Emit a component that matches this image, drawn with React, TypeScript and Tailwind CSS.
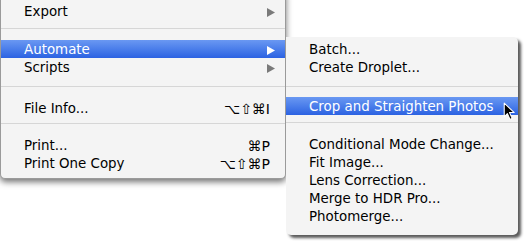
const Arrow = ({ active }: { active?: boolean }) => (
  <svg width="8" height="9" viewBox="0 0 8 9" className="ml-auto">
    <path d="M0 0 L8 4.5 L0 9 Z" fill={active ? "#ffffff" : "#7a7a7a"} />
  </svg>
);

const Row = ({
  label,
  shortcut,
  submenu,
  active,
}: {
  label: string;
  shortcut?: string;
  submenu?: boolean;
  active?: boolean;
}) => (
  <div
    className={`h-[18px] flex items-center pt-[2px] pl-[23px] pr-[10px] text-[13.4px] leading-none ${
      active
        ? "bg-gradient-to-b from-[#6a98f2] to-[#2c62e2] text-white"
        : "text-black"
    }`}
  >
    <span>{label}</span>
    {shortcut && <span className="ml-auto pr-[5px] text-[14px]">{shortcut}</span>}
    {submenu && <Arrow active={active} />}
  </div>
);

const Sep = ({ top, bottom }: { top: string; bottom: string }) => (
  <div className={`${top} ${bottom}`}>
    <div className="h-px bg-[#d6d6d6]" />
  </div>
);

export default function App() {
  return (
    <div className="w-[526px] h-[241px] bg-white relative overflow-hidden font-['DejaVu_Sans',sans-serif]">
      {/* main File menu, top cut off */}
      <div className="w-[286px] -mt-[8px] pt-[10px] pb-[6px] bg-[#f4f4f4] border-l border-r border-b border-[#9a9a9a] rounded-b-[5px] shadow-[0_3px_6px_rgba(0,0,0,0.55)]">
        <Row label="Export" submenu />
        <Sep top="pt-[8px]" bottom="pb-[11px]" />
        <Row label="Automate" submenu active />
        <Row label="Scripts" submenu />
        <Sep top="pt-[10px]" bottom="pb-[12px]" />
        <Row label="File Info..." shortcut="⌥⇧⌘I" />
        <Sep top="pt-[6px]" bottom="pb-[12px]" />
        <Row label="Print..." shortcut="⌘P" />
        <Row label="Print One Copy" shortcut="⌥⇧⌘P" />
      </div>

      {/* Automate submenu */}
      <div className="absolute left-[286px] top-[37px] w-[232px] h-[198px] pt-[3px] bg-[#f4f4f4] rounded-tr-[5px] rounded-b-[5px] shadow-[3px_3px_3px_rgba(0,0,0,0.65)]">
        <Row label="Batch..." />
        <Row label="Create Droplet..." />
        <Sep top="pt-[10px]" bottom="pb-[10px]" />
        <Row label="Crop and Straighten Photos" active />
        <Sep top="pt-[7px]" bottom="pb-[12px]" />
        <Row label="Conditional Mode Change..." />
        <Row label="Fit Image..." />
        <Row label="Lens Correction..." />
        <Row label="Merge to HDR Pro..." />
        <Row label="Photomerge..." />
      </div>

      {/* mouse pointer */}
      <svg
        className="absolute left-[503px] top-[102px]"
        width="13"
        height="19"
        viewBox="0 0 12 18"
      >
        <path
          d="M1 1 L1 14 L4 11 L6.5 16.5 L8.5 15.5 L6 10 L10.5 10 Z"
          fill="#000"
          stroke="#fff"
          strokeWidth="1"
          strokeLinejoin="round"
        />
      </svg>
    </div>
  );
}
